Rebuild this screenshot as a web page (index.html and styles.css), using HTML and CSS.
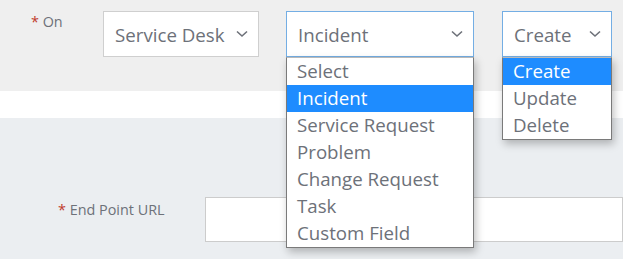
FILE: index.html
```html
<!DOCTYPE html>
<html lang="en">
<head>
    <meta charset="UTF-8">
    <meta name="viewport" content="width=device-width, initial-scale=1.0">
    <title>Integration Trigger</title>
    <link rel="stylesheet" href="styles.css">
</head>
<body>

    <div class="trigger-row">
        <label class="field-label on-label"><span class="req">*</span> On</label>

        <div class="select-wrap module-select">
            <div class="fake-select">
                <span>Service Desk</span>
                <svg class="chevron" viewBox="0 0 12 8"><polyline points="1,1.5 6,6 11,1.5"/></svg>
            </div>
        </div>

        <div class="select-wrap type-select">
            <div class="fake-select open">
                <span>Incident</span>
                <svg class="chevron" viewBox="0 0 12 8"><polyline points="1,1.5 6,6 11,1.5"/></svg>
            </div>
            <ul class="options">
                <li>Select</li>
                <li class="active">Incident</li>
                <li>Service Request</li>
                <li>Problem</li>
                <li>Change Request</li>
                <li>Task</li>
                <li>Custom Field</li>
            </ul>
        </div>

        <div class="select-wrap action-select">
            <div class="fake-select open">
                <span>Create</span>
                <svg class="chevron" viewBox="0 0 12 8"><polyline points="1,1.5 6,6 11,1.5"/></svg>
            </div>
            <ul class="options">
                <li class="active">Create</li>
                <li>Update</li>
                <li>Delete</li>
            </ul>
        </div>
    </div>

    <div class="spacer"></div>

    <div class="endpoint-row">
        <label class="field-label url-label"><span class="req">*</span> End Point URL</label>
        <input type="text" class="url-input">
    </div>

</body>
</html>
```

FILE: styles.css
```css
/* page */
body {
    margin: 0;
    font-family: "Open Sans", Arial, sans-serif;
    color: #6d7179;
    background: #ebeef1;
}
.req {
    color: #c0392b;
}
.field-label {
    font-size: 14.4px;
    line-height: 20px;
}
/* top row with the three selects */
.trigger-row {
    display: flex;
    align-items: flex-start;
    height: 91px;
    box-sizing: border-box;
    padding: 11px 0 0 31px;
    background: #efefef;
}
.on-label {
    width: 72px;
    padding-top: 1px;
}
.select-wrap {
    position: relative;
}
.module-select {
    width: 156px;
    margin-right: 27px;
}
.type-select {
    width: 188px;
    margin-right: 28px;
}
.action-select {
    width: 110px;
}
.fake-select {
    display: flex;
    align-items: center;
    justify-content: space-between;
    height: 46px;
    box-sizing: border-box;
    padding: 0 10px 0 11px;
    background: white;
    border: 1px solid #cfcfcf;
    font-size: 18.7px;
}
.fake-select.open {
    border-color: #74aee4;
}
.chevron {
    width: 12px;
    height: 8px;
    fill: none;
    stroke: #6d7179;
    stroke-width: 1.6;
}
/* open dropdown lists */
.options {
    position: absolute;
    top: 46px;
    left: 0;
    right: 0;
    margin: 0;
    padding: 0;
    list-style: none;
    background: white;
    border: 1px solid #7a7a7a;
    border-top-color: #b9b9b9;
    box-shadow: 2px 4px 8px rgba(0, 0, 0, 0.25);
    z-index: 5;
}
.options li {
    height: 27px;
    line-height: 26px;
    padding-left: 10px;
    font-size: 18.7px;
    white-space: nowrap;
}
.options li.active {
    background: #1e8cff;
    color: white;
}
.spacer {
    height: 27px;
    background: white;
}
/* end point url */
.endpoint-row {
    display: flex;
    align-items: flex-start;
    padding: 79px 0 0 58px;
    height: 141px;
    box-sizing: border-box;
}
.url-label {
    width: 147px;
    padding-top: 3px;
}
.url-input {
    flex: 1;
    height: 45px;
    box-sizing: border-box;
    border: 1px solid #cccccc;
    background: white;
    outline: none;
}
```
